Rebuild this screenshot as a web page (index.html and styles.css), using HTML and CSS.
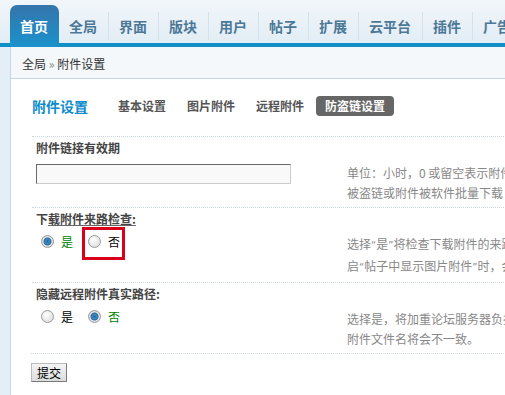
FILE: index.html
```html
<!DOCTYPE html>
<html lang="zh-CN">
<head>
    <meta charset="UTF-8">
    <title>附件设置</title>
    <link rel="stylesheet" href="styles.css">
</head>
<body>

    <!-- Top navigation -->
    <div class="nav">
        <a class="nav-tab active">首页</a>
        <a class="nav-tab">全局</a>
        <a class="nav-tab">界面</a>
        <a class="nav-tab">版块</a>
        <a class="nav-tab">用户</a>
        <a class="nav-tab">帖子</a>
        <a class="nav-tab">扩展</a>
        <a class="nav-tab">云平台</a>
        <a class="nav-tab">插件</a>
        <a class="nav-tab">广告</a>
    </div>

    <div class="frame">
        <!-- Breadcrumb -->
        <div class="crumb">全局 <span class="raquo">&raquo;</span> 附件设置</div>

        <div class="content">
            <!-- Sub navigation -->
            <div class="subnav">
                <span class="subnav-title">附件设置</span>
                <a class="subnav-item">基本设置</a>
                <a class="subnav-item">图片附件</a>
                <a class="subnav-item">远程附件</a>
                <a class="subnav-item current">防盗链设置</a>
            </div>

            <div class="section">
                <div class="label">附件链接有效期</div>
                <div class="row">
                    <div class="field">
                        <input type="text" class="text-input">
                    </div>
                    <div class="tip">单位：小时，0 或留空表示附件链接永久有效，设置后可防止附件<br>被盗链或附件被软件批量下载</div>
                </div>
            </div>

            <div class="section">
                <div class="label">下<span class="under">载附件来路检查:</span></div>
                <div class="row">
                    <div class="field">
                        <div class="radios">
                            <span class="radio checked"></span><span class="opt on">是</span>
                            <span class="radio"></span><span class="opt">否</span>
                        </div>
                        <div class="mark"></div>
                    </div>
                    <div class="tip">选择<span class="q">“</span>是<span class="q">”</span>将检查下载附件的来路，来自其他网站或论坛的下载请求将被禁止。开<br>启<span class="q">“</span>帖子中显示图片附件<span class="q">”</span>时，会加重服务器负担</div>
                </div>
            </div>

            <div class="section">
                <div class="label">隐藏远程附件真实路径:</div>
                <div class="row">
                    <div class="field">
                        <div class="radios">
                            <span class="radio"></span><span class="opt">是</span>
                            <span class="radio checked"></span><span class="opt on">否</span>
                        </div>
                    </div>
                    <div class="tip">选择是，将加重论坛服务器负担，并且远程附件的实际地址与显示的<br>附件文件名将会不一致。</div>
                </div>
            </div>

            <div class="section submit-row">
                <button class="btn">提交</button>
            </div>
        </div>
    </div>

</body>
</html>
```

FILE: styles.css
```css
body {
    margin: 0;
    width: 960px;
    height: 395px;
    font-family: "Noto Sans CJK SC", "DejaVu Sans", sans-serif;
    font-size: 12px;
    color: #333;
    background-color: #e4eef6;
    overflow: hidden;
}

/* top navigation */
.nav {
    display: flex;
    align-items: flex-end;
    height: 43px;
    padding-left: 10px;
    background: linear-gradient(#f1f6fa, #e2edf5);
    border-bottom: 4px solid #1090c7;
}

.nav-tab {
    height: 28px;
    line-height: 28px;
    margin-bottom: 3px;
    padding: 0 11px 0 10px;
    border-right: 1px solid #d3e1eb;
    font-size: 14px;
    font-weight: bold;
    color: #4c7897;
    white-space: nowrap;
}

.nav-tab:last-child {
    border-right: none;
}

.nav-tab.active {
    height: 42px;
    line-height: 42px;
    margin-bottom: -4px;
    padding: 0 11px 0 10px;
    border-right: none;
    border-radius: 7px 7px 0 0;
    background: linear-gradient(#3475ab, #1b92cc);
    color: #fff;
}

/* frame with breadcrumb and content */
.frame {
    margin-left: 10px;
    border-left: 1px solid #c3d7e6;
    background-color: #fff;
    height: 348px;
}

.crumb {
    height: 31px;
    line-height: 34px;
    padding-left: 11px;
    background-color: #f4f8fb;
    border-bottom: 1px solid #c3d7e6;
    color: #333;
}

.raquo {
    color: #888;
}

.content {
    padding-left: 21px;
}

.subnav {
    display: flex;
    align-items: center;
    padding-top: 17px;
    height: 20px;
    margin-bottom: 20px;
}

.subnav-title {
    font-size: 14px;
    font-weight: bold;
    color: #0b8bcb;
    margin-right: 21px;
}

.subnav-item {
    height: 20px;
    line-height: 20px;
    padding: 0 9px;
    margin-right: 3px;
    font-weight: bold;
    color: #555;
    border-radius: 4px;
}

.subnav-item.current {
    background-color: #666;
    color: #fff;
}

.section {
    border-top: 1px dotted #c9d8e4;
    padding-left: 4px;
}

.label {
    line-height: 22px;
    font-weight: bold;
    color: #444;
}

.under {
    text-decoration: underline;
    text-decoration-color: #666;
}

.row {
    display: flex;
}

.field {
    position: relative;
    width: 311px;
    flex-shrink: 0;
}

.text-input {
    box-sizing: border-box;
    width: 255px;
    height: 20px;
    margin: 5px 0 0;
    padding: 0 3px;
    border: 1px solid #6a6a6a;
    border-right-color: #ccc;
    border-bottom-color: #ccc;
    background-color: #f9f9f9;
}

.tip {
    padding: 4px 0;
    line-height: 20px;
    color: #888;
    white-space: nowrap;
}

.tip .q {
    font-family: "DejaVu Sans", sans-serif;
    font-size: 10px;
}

.radios {
    display: flex;
    align-items: center;
    height: 22px;
    padding-left: 5px;
}

.radio {
    box-sizing: border-box;
    width: 13px;
    height: 13px;
    margin-right: 7px;
    border-radius: 50%;
    border: 1px solid #9a9a9a;
    background: radial-gradient(circle at 40% 35%, #fff, #d6d6d6);
}

.radio.checked {
    background: radial-gradient(circle, #1e5c8c 0, #3f8cc7 2px, #2b6a9c 3.5px, #e9e9e9 4.5px, #cfcfcf 6px);
}

.opt {
    width: 12px;
    margin-right: 15px;
    color: #000;
}

.opt.on {
    color: #008000;
}

/* red annotation box */
.mark {
    position: absolute;
    left: 46px;
    top: -3px;
    width: 37px;
    height: 27px;
    border: 3px solid #d9001b;
}

.submit-row {
    padding: 9px 0 0 0;
    margin-left: -1px;
}

.btn {
    width: 36px;
    height: 19px;
    padding: 0;
    font-family: "Noto Sans CJK SC", sans-serif;
    font-size: 12px;
    color: #000;
    background: linear-gradient(#f4f4f4, #dcdcdc);
    border: 1px solid #7a7a7a;
    border-top-color: #bbb;
    border-left-color: #bbb;
}
```
